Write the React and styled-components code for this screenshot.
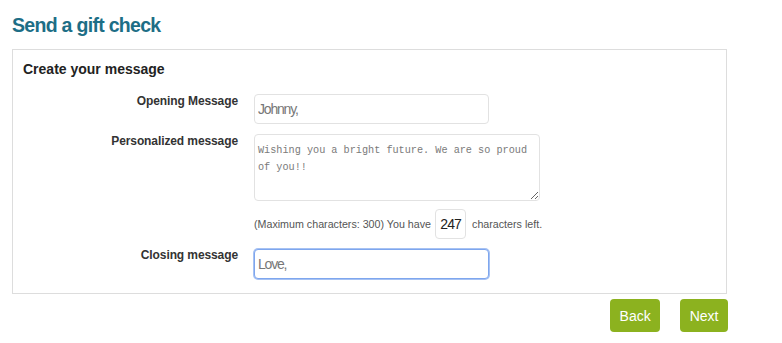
import React from "react";
import styled, { createGlobalStyle } from "styled-components";

const Global = createGlobalStyle`
  html, body { margin: 0; padding: 0; background: #fff; }
  body { font-family: "Liberation Sans", Arial, sans-serif; color: #333; }
  * { box-sizing: border-box; }
`;

const Page = styled.div`
  width: 727px;
  padding: 0 0 0 12px;
`;

const Title = styled.h1`
  margin: 0;
  padding-top: 14px;
  height: 49px;
  font-size: 19.5px;
  line-height: 22px;
  font-weight: bold;
  color: #1d6e86;
  letter-spacing: -0.7px;
`;

const Panel = styled.section`
  width: 715px;
  border: 1px solid #dddddd;
  padding: 11px 10px 14px 10px;
`;

const PanelHeading = styled.h2`
  margin: 0 0 17px 0;
  font-size: 14px;
  line-height: 16px;
  font-weight: bold;
  color: #222;
`;

const Form = styled.div`
  display: grid;
  grid-template-columns: 215px 1fr;
  column-gap: 16px;
  row-gap: 10px;
`;

const Label = styled.label`
  text-align: right;
  font-size: 12px;
  line-height: 12px;
  font-weight: bold;
  color: #333;
  letter-spacing: -0.1px;
  padding-top: ${(p) => p.$offset || 0}px;
`;

const Field = styled.div`
  display: flex;
  flex-direction: column;
  gap: 6px;
`;

const TextInput = styled.input`
  width: 235px;
  height: 30px;
  border: 1px solid ${(p) => (p.$focused ? "#7ea6ee" : "#e2e2e2")};
  box-shadow: ${(p) => (p.$focused ? "0 0 0 1px #a7c2f3" : "none")};
  border-radius: 4px;
  padding: 0 3px;
  font-family: "Liberation Sans", Arial, sans-serif;
  font-size: 14px;
  letter-spacing: -1.2px;
  color: #777;
  outline: none;
  background: #fff;
  caret-color: #333;
`;

const TextArea = styled.textarea`
  width: 286px;
  height: 67px;
  border: 1px solid #e2e2e2;
  border-radius: 4px;
  padding: 7px 3px;
  font-family: "Liberation Mono", "DejaVu Sans Mono", monospace;
  font-size: 10.2px;
  line-height: 17px;
  color: #7a7a7a;
  outline: none;
  resize: both;
`;

const CounterLine = styled.div`
  display: flex;
  align-items: center;
  gap: 4px;
  font-size: 10.7px;
  color: #555;
  padding-top: 2px;
`;

const CountBox = styled.span`
  display: inline-flex;
  align-items: center;
  justify-content: center;
  width: 31px;
  height: 30px;
  border: 1px solid #e2e2e2;
  border-radius: 4px;
  font-family: "Liberation Sans", Arial, sans-serif;
  font-size: 14px;
  letter-spacing: -1px;
  color: #222;
  margin-right: 2px;
`;

const Actions = styled.div`
  width: 716px;
  display: flex;
  justify-content: flex-end;
  gap: 20px;
  margin-top: 5px;
`;

const Button = styled.button`
  height: 33px;
  padding: 0 9.5px;
  border: none;
  border-radius: 4px;
  background: #8cb21f;
  color: #fff;
  font-family: "Liberation Sans", Arial, sans-serif;
  font-size: 14px;
  cursor: pointer;
`;

export default function App() {
  return (
    <Page>
      <Global />
      <Title>Send a gift check</Title>
      <Panel>
        <PanelHeading>Create your message</PanelHeading>
        <Form>
          <Label $offset={1}>Opening Message</Label>
          <TextInput defaultValue="Johnny," />

          <Label $offset={1}>Personalized message</Label>
          <Field>
            <TextArea defaultValue="Wishing you a bright future. We are so proud of you!!" />
            <CounterLine>
              (Maximum characters: 300) You have <CountBox>247</CountBox> characters left.
            </CounterLine>
          </Field>

          <Label $offset={0}>Closing message</Label>
          <TextInput $focused defaultValue="Love," />
        </Form>
      </Panel>
      <Actions>
        <Button>Back</Button>
        <Button>Next</Button>
      </Actions>
    </Page>
  );
}
